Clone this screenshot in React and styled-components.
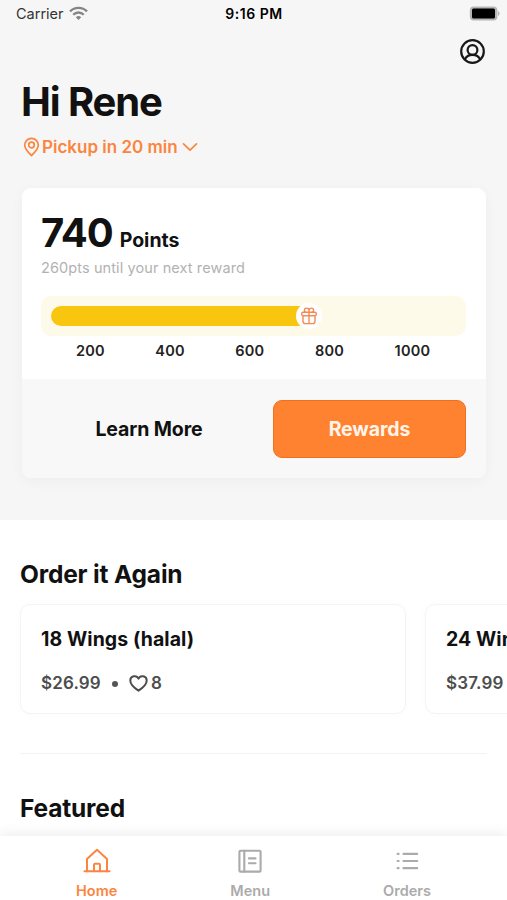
import React from 'react';
import styled, { createGlobalStyle } from 'styled-components';

const GlobalStyle = createGlobalStyle`
  * {
    box-sizing: border-box;
  }

  html, body, #root {
    height: 100%;
    margin: 0;
  }

  body {
    font-family: Inter, 'Liberation Sans', sans-serif;
    color: #111;
    background: #fff;
    overflow: hidden;
  }

  svg {
    display: block;
    flex: none;
  }
`;

const Screen = styled.div`
  display: flex;
  flex-direction: column;
  width: 507px;
  height: 900px;
  overflow: hidden;
`;

const Content = styled.main`
  flex: 1;
  min-height: 0;
  overflow: hidden;
`;

const Hero = styled.section`
  height: 520px;
  background: #f6f6f6;
`;

const StatusBar = styled.div`
  display: grid;
  grid-template-columns: 1fr auto 1fr;
  align-items: center;
  height: 27px;
  padding: 0 7px 0 16px;
  font-size: 14.5px;
`;

const Carrier = styled.div`
  display: flex;
  align-items: center;
  gap: 5px;
  color: #333;
`;

const Clock = styled.div`
  margin-left: -8px;
  font-size: 14px;
  font-weight: 600;
  letter-spacing: 0.5px;
  color: #000;
`;

const Battery = styled.div`
  justify-self: end;
`;

const TopRow = styled.div`
  display: flex;
  justify-content: flex-end;
  padding: 11px 21px 0 0;
`;

const Greeting = styled.h1`
  margin: 12px 0 0 21px;
  font-size: 40px;
  line-height: 50px;
  font-weight: 700;
  letter-spacing: -1.1px;
`;

const Pickup = styled.div`
  display: flex;
  align-items: center;
  margin: 8px 0 0 23px;
  height: 24px;
  font-size: 17px;
  font-weight: 600;
  color: #fb8540;

  span {
    margin: 0 4px 0 2px;
  }
`;

const PointsCard = styled.div`
  margin: 29px 21px 0 22px;
  height: 290px;
  border-radius: 9px;
  overflow: hidden;
  background: #fff;
  box-shadow: 0 3px 14px rgba(0, 0, 0, 0.04);
`;

const PointsBody = styled.div`
  height: 191px;
  padding: 20px 20px 0 19px;
`;

const Total = styled.div`
  display: flex;
  align-items: baseline;
  gap: 7px;
  height: 48px;
  line-height: 49px;
  font-size: 40px;
  font-weight: 700;
  letter-spacing: -1.1px;

  small {
    font-size: 19.5px;
    font-weight: 700;
    letter-spacing: 0;
  }
`;

const Hint = styled.div`
  margin-top: 2px;
  line-height: 20px;
  font-size: 14.5px;
  letter-spacing: 0.1px;
  color: #b2b2b2;
`;

const Track = styled.div`
  display: flex;
  align-items: center;
  height: 40px;
  margin-top: 18px;
  padding: 0 10px;
  border-radius: 10px;
  background: #fefaea;
`;

const Fill = styled.div`
  width: 258px;
  height: 20px;
  border-radius: 10px;
  background: #f8c60f;
`;

const Gift = styled.div`
  display: flex;
  align-items: center;
  justify-content: center;
  width: 26px;
  height: 26px;
  margin-left: -13px;
  border-radius: 50%;
  background: #fff;
`;

const Scale = styled.div`
  display: flex;
  gap: 50.6px;
  padding: 5px 0 0 35px;
  line-height: 20px;
  font-size: 14.5px;
  font-weight: 600;
  letter-spacing: 0.2px;
  color: #222;
`;

const Actions = styled.div`
  display: grid;
  grid-template-columns: 1fr 193px;
  gap: 20px;
  align-items: center;
  height: 99px;
  padding: 1px 20px 0 23px;
  background: #f8f8f8;
`;

const Action = styled.button`
  height: 58px;
  padding: 0;
  border: 1px solid ${(p) => (p.$primary ? '#f0701f' : 'transparent')};
  border-radius: 9px;
  background: ${(p) => (p.$primary ? '#ff8230' : 'transparent')};
  color: ${(p) => (p.$primary ? '#fff4ea' : '#111')};
  font-family: inherit;
  font-size: 19.5px;
  font-weight: 700;
  letter-spacing: -0.1px;
`;

const SectionTitle = styled.h2`
  margin: ${(p) => p.$top}px 0 0 20px;
  line-height: 32px;
  font-size: 24.5px;
  font-weight: 700;
  letter-spacing: -0.17px;
`;

const OrderList = styled.div`
  display: flex;
  gap: 19px;
  margin-top: 14px;
  padding-left: 20px;
`;

const OrderCard = styled.article`
  flex: none;
  width: 386px;
  height: 110px;
  padding: 20px 20px 0;
  border: 1px solid #f4f4f4;
  border-radius: 10px;
  background: #fff;
  box-shadow: 0 0 8px rgba(0, 0, 0, 0.02);
`;

const OrderName = styled.h3`
  margin: 0;
  line-height: 29px;
  font-size: 19.5px;
  font-weight: 700;
  letter-spacing: 0.08px;
  white-space: nowrap;
`;

const OrderMeta = styled.div`
  display: flex;
  align-items: center;
  margin-top: 17px;
  line-height: 24px;
  font-size: 17px;
  font-weight: 600;
  letter-spacing: 0.15px;
  color: #4d4d4d;

  svg {
    margin-right: 3px;
  }
`;

const Dot = styled.i`
  width: 6px;
  height: 6px;
  margin: 1px 11px 0;
  border-radius: 50%;
  background: #555;
`;

const Divider = styled.hr`
  height: 1px;
  margin: 39px 20px 0;
  border: 0;
  background: #f3f3f3;
`;

const TabBar = styled.nav`
  position: relative;
  display: flex;
  flex: none;
  justify-content: space-between;
  height: 64px;
  padding: 0 76px;
  background: #fff;
  box-shadow: 0 -2px 12px rgba(0, 0, 0, 0.08);
`;

const Tab = styled.a`
  display: flex;
  flex-direction: column;
  align-items: center;
  padding-top: 11px;
  font-size: 14.5px;
  font-weight: 600;
  line-height: 18px;
  color: ${(p) => (p.$active ? '#fb8540' : '#ababab')};

  svg {
    margin-bottom: 7px;
  }
`;

const WifiIcon = () => (
  <svg width="19" height="15" viewBox="0 0 19 15" fill="none" stroke="#858585" strokeWidth="2.3">
    <path d="M1 5.4a12 12 0 0 1 17 0" />
    <path d="M4.2 8.7a7.5 7.5 0 0 1 10.6 0" />
    <path d="M9.5 14 6.8 11.3a3.8 3.8 0 0 1 5.4 0z" fill="#858585" stroke="none" />
  </svg>
);

const BatteryIcon = () => (
  <svg width="31" height="15" viewBox="0 0 31 15">
    <rect x="0.8" y="0.5" width="27.6" height="14" rx="4" fill="#b5b5b5" />
    <rect x="3" y="2.6" width="23" height="9.8" rx="1.5" fill="#000" />
    <path d="M29 5v5q1.6-.8 1.6-2.5T29 5z" fill="#b5b5b5" />
  </svg>
);

const UserIcon = () => (
  <svg width="27" height="27" viewBox="0 0 27 27" fill="none" stroke="#181818" strokeWidth="2.2">
    <circle cx="13.5" cy="13.5" r="11.3" />
    <circle cx="13.5" cy="12" r="4.9" />
    <path d="M5.8 21.7c1.3-3.1 4.3-4.8 7.7-4.8s6.4 1.7 7.7 4.8" />
  </svg>
);

const PinIcon = () => (
  <svg width="17" height="20" viewBox="0 0 17 20" fill="none" stroke="currentColor" strokeWidth="1.7" strokeLinejoin="round">
    <path d="M8.5 18.5C11 16.3 15.3 11.9 15.3 8.1a6.8 6.8 0 0 0-13.6 0C1.7 11.9 6 16.3 8.5 18.5z" />
    <circle cx="8.5" cy="8" r="2.8" />
  </svg>
);

const ChevronIcon = () => (
  <svg width="16" height="10" viewBox="0 0 16 10" fill="none" stroke="currentColor" strokeWidth="1.7" strokeLinecap="round" strokeLinejoin="round">
    <path d="M1.5 1.9 8 8.2l6.5-6.3" />
  </svg>
);

const GiftIcon = () => (
  <svg width="18" height="18" viewBox="0 0 18 18" fill="none" stroke="#f58a55" strokeWidth="1.4" strokeLinejoin="round">
    <rect x="1.7" y="5.3" width="14.6" height="3.4" rx="1.4" />
    <path d="M3 8.7v5.5q0 2.4 2.4 2.4h7.200q2.400 0 2.400-2.400V8.700M9 5.300v11.300" />
    <path d="M9 5.300V3.400a2.300 2.300 0 0 0-4.600 0q0 1.900 1.900 1.900M9 5.300V3.400a2.300 2.300 0 0 1 4.600 0q0 1.900-1.900 1.900" />
  </svg>
);

const HeartIcon = () => (
  <svg width="19" height="17" viewBox="0 0 19 17" fill="none" stroke="currentColor" strokeWidth="2" strokeLinejoin="round">
    <path d="M9.5 15.7C6.5 13.8 1.3 10.2 1.3 5.6a4.3 4.3 0 0 1 8.2-1.9 4.3 4.3 0 0 1 8.2 1.9c0 4.6-5.2 8.2-8.2 10.1z" />
  </svg>
);

const HomeIcon = () => (
  <svg width="28" height="28" viewBox="0 0 28 28" fill="none" stroke="currentColor" strokeWidth="2" strokeLinecap="round" strokeLinejoin="round">
    <path d="M1.5 24.3h25" />
    <path d="M4 24.3V12L14 2.800l10 9.200v12.300" />
    <path d="M11 24.300v-6.500q0-1 1-1h4q1 0 1 1v6.500" />
  </svg>
);

const MenuIcon = () => (
  <svg width="28" height="28" viewBox="0 0 28 28" fill="none" stroke="currentColor" strokeWidth="2.1" strokeLinecap="round" strokeLinejoin="round">
    <rect x="3.4" y="3.8" width="21.2" height="20.8" rx="1.2" />
    <path d="M8.3 3.8v20.8M13 11.4h6.5M13 16.2h6.5" />
  </svg>
);

const OrdersIcon = () => (
  <svg width="28" height="28" viewBox="0 0 28 28" fill="none" stroke="currentColor" strokeWidth="2.2" strokeLinecap="round">
    <path d="M10.5 6.8h13.7M10.5 14h13.7M10.5 21.2h13.7M4.600 6.800h1M4.600 14h1M4.600 21.200h1" />
  </svg>
);

const milestones = [200, 400, 600, 800, 1000];

const orders = [
  { name: '18 Wings (halal)', price: '$26.99', likes: 8 },
  { name: '24 Wings (halal)', price: '$37.99', likes: 8 },
];

const tabs = [
  { label: 'Home', Icon: HomeIcon, active: true },
  { label: 'Menu', Icon: MenuIcon },
  { label: 'Orders', Icon: OrdersIcon },
];

export default function App() {
  return (
    <Screen>
      <GlobalStyle />
      <Content>
        <Hero>
          <StatusBar>
            <Carrier>
              Carrier
              <WifiIcon />
            </Carrier>
            <Clock>9:16 PM</Clock>
            <Battery>
              <BatteryIcon />
            </Battery>
          </StatusBar>
          <TopRow>
            <UserIcon />
          </TopRow>
          <Greeting>Hi Rene</Greeting>
          <Pickup>
            <PinIcon />
            <span>Pickup in 20 min</span>
            <ChevronIcon />
          </Pickup>
          <PointsCard>
            <PointsBody>
              <Total>
                740 <small>Points</small>
              </Total>
              <Hint>260pts until your next reward</Hint>
              <Track>
                <Fill />
                <Gift>
                  <GiftIcon />
                </Gift>
              </Track>
              <Scale>
                {milestones.map((value) => (
                  <span key={value}>{value}</span>
                ))}
              </Scale>
            </PointsBody>
            <Actions>
              <Action>Learn More</Action>
              <Action $primary>Rewards</Action>
            </Actions>
          </PointsCard>
        </Hero>

        <SectionTitle $top={38}>Order it Again</SectionTitle>
        <OrderList>
          {orders.map((order) => (
            <OrderCard key={order.name}>
              <OrderName>{order.name}</OrderName>
              <OrderMeta>
                {order.price}
                <Dot />
                <HeartIcon />
                {order.likes}
              </OrderMeta>
            </OrderCard>
          ))}
        </OrderList>
        <Divider />
        <SectionTitle $top={38}>Featured</SectionTitle>
      </Content>

      <TabBar>
        {tabs.map(({ label, Icon, active }) => (
          <Tab key={label} $active={active}>
            <Icon />
            {label}
          </Tab>
        ))}
      </TabBar>
    </Screen>
  );
}
